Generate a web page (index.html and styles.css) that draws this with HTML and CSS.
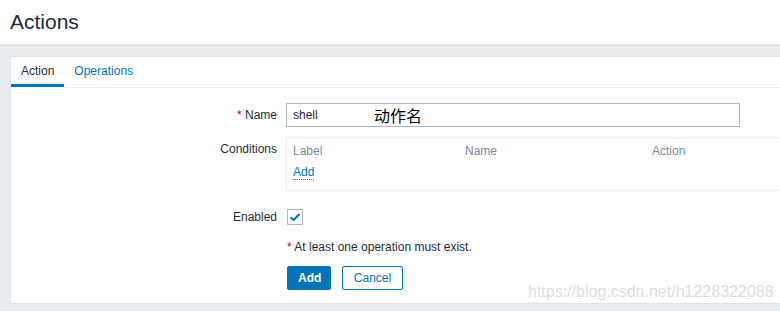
FILE: index.html
```html
<!DOCTYPE html>
<html lang="en">
<head>
    <meta charset="UTF-8">
    <title>Actions</title>
    <link rel="stylesheet" href="styles.css">
</head>
<body>
    <header class="page-header">
        <h1>Actions</h1>
    </header>

    <main class="wrapper">
        <div class="card">
            <ul class="tabs">
                <li class="tab active">Action</li>
                <li class="tab">Operations</li>
            </ul>

            <form class="form">
                <div class="row row-name">
                    <label class="label" for="name"><span class="req">*</span> Name</label>
                    <div class="field">
                        <input type="text" id="name" class="text-input" value="shell">
                        <span class="note">动作名</span>
                    </div>
                </div>

                <div class="row row-conditions">
                    <div class="label label-top">Conditions</div>
                    <div class="cond-box">
                        <div class="cond-head">
                            <span class="col col-label">Label</span>
                            <span class="col col-name">Name</span>
                            <span class="col col-action">Action</span>
                        </div>
                        <a class="link" href="#">Add</a>
                    </div>
                </div>

                <div class="row row-enabled">
                    <div class="label">Enabled</div>
                    <div class="checkbox">
                        <svg width="14" height="14" viewBox="0 0 14 14">
                            <path d="M2.5 7.2 L5.6 10 L11.5 4" fill="none" stroke="#0275b8" stroke-width="2.2"/>
                        </svg>
                    </div>
                </div>

                <div class="row row-hint">
                    <div class="label"></div>
                    <div class="hint"><span class="req">*</span> At least one operation must exist.</div>
                </div>

                <div class="row row-buttons">
                    <div class="label"></div>
                    <div class="buttons">
                        <button type="button" class="btn btn-main">Add</button>
                        <button type="button" class="btn btn-alt">Cancel</button>
                    </div>
                </div>
            </form>

            <span class="watermark">https://blog.csdn.net/h1228322088</span>
        </div>
    </main>
</body>
</html>
```

FILE: styles.css
```css
* {
    box-sizing: border-box;
}

body {
    margin: 0;
    font-family: Arial, "Liberation Sans", sans-serif;
    font-size: 12px;
    color: #1f2c33;
    background: #ebeef0;
    overflow: hidden;
    height: 311px;
}

.page-header {
    background: #fff;
    height: 46px;
    border-bottom: 2px solid #dfe4e7;
    padding: 0 10px;
}

.page-header h1 {
    margin: 0;
    font-size: 21px;
    font-weight: normal;
    line-height: 44px;
}

.wrapper {
    padding: 10px 0 0 10px;
}

.card {
    position: relative;
    background: #fff;
    border: 1px solid #dfe4e7;
    border-right: none;
    height: 248px;
    overflow: hidden;
}

.tabs {
    list-style: none;
    margin: 0;
    padding: 0;
    display: flex;
    border-bottom: 1px solid #ebeef0;
    height: 31px;
}

.tab {
    padding: 0 10px;
    line-height: 28px;
    color: #0275b8;
    border-bottom: 3px solid transparent;
}

.tab.active {
    color: #1f2c33;
    border-bottom-color: #0275b8;
}

.form {
    padding-top: 15px;
}

.row {
    display: grid;
    grid-template-columns: 266px 1fr;
    column-gap: 9px;
    align-items: center;
}

.label {
    text-align: right;
}

.label-top {
    align-self: start;
    padding-top: 5px;
}

.req {
    color: #d40000;
}

.field {
    position: relative;
}

.text-input {
    display: block;
    width: 454px;
    height: 24px;
    border: 1px solid #acbbc2;
    padding: 0 6px;
    font: inherit;
    color: #1f2c33;
    outline: none;
}

.note {
    position: absolute;
    left: 88px;
    top: 2px;
    font-family: "Noto Sans CJK SC", sans-serif;
    font-size: 16px;
    line-height: 20px;
    color: #000;
}

.row-conditions {
    margin-top: 10px;
}

.cond-box {
    height: 54px;
    border: 1px solid #ebeef0;
    border-right: none;
    padding: 6px 6px 0;
}

.cond-head {
    display: flex;
    color: #768d99;
    line-height: 14px;
}

.col-label {
    width: 172px;
}

.col-name {
    width: 187px;
}

.link {
    display: inline-block;
    margin-top: 7px;
    color: #0275b8;
    text-decoration: none;
    border-bottom: 1px dotted #0275b8;
    line-height: 14px;
}

.row-enabled {
    margin-top: 18px;
}

.checkbox {
    width: 16px;
    height: 16px;
    border: 1px solid #acbbc2;
    display: flex;
    align-items: center;
    justify-content: center;
    margin-left: 1px;
}

.row-hint {
    margin-top: 15px;
}

.hint {
    padding-left: 1px;
    line-height: 14px;
}

.row-buttons {
    margin-top: 12px;
}

.buttons {
    display: flex;
    gap: 11px;
    padding-left: 1px;
}

.btn {
    height: 24px;
    font: inherit;
    border-radius: 2px;
    padding: 0 10px;
    cursor: pointer;
}

.btn-main {
    background: #0275b8;
    border: 1px solid #0275b8;
    color: #fff;
    font-weight: bold;
    width: 44px;
}

.btn-alt {
    background: #fff;
    border: 1px solid #0275b8;
    color: #0275b8;
    width: 61px;
}

.watermark {
    position: absolute;
    left: 517px;
    top: 226px;
    font-size: 16px;
    color: #dedede;
}
```
